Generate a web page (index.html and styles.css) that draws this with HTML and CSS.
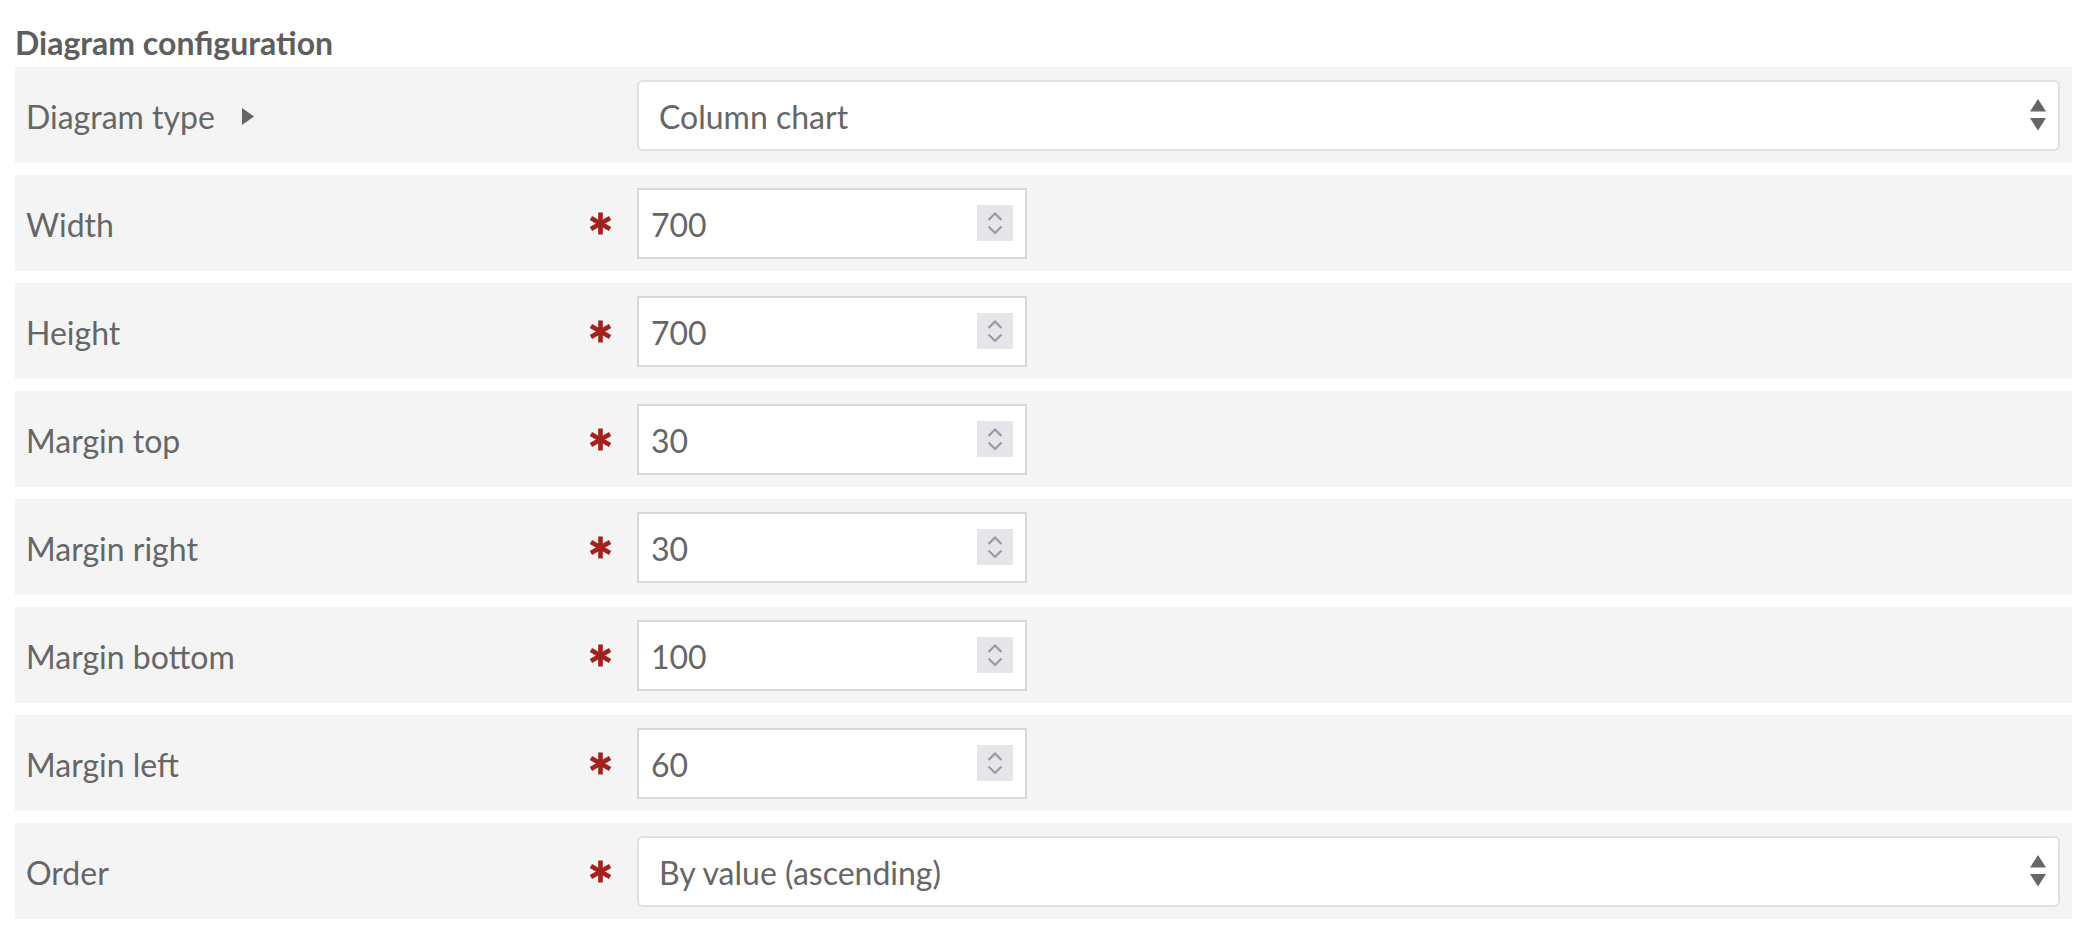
FILE: index.html
```html
<!DOCTYPE html>
<html lang="en">
<head>
<meta charset="utf-8">
<title>Diagram configuration</title>
<link rel="stylesheet" href="styles.css">
</head>
<body>
<div class="page">
  <h2 class="title">Diagram configuration</h2>

  <div class="row">
    <div class="label"><span class="txt">Diagram type</span>
      <svg class="caret" width="12" height="17" viewBox="0 0 12 17"><polygon points="0,0 12,8.5 0,17" fill="#666"/></svg>
    </div>
    <div class="req"></div>
    <div class="select"><span class="txt">Column chart</span>
      <svg class="arrows" width="16" height="33" viewBox="0 0 16 33"><polygon points="0,12.5 8,0 16,12.5" fill="#666"/><polygon points="0,19 16,19 8,31.5" fill="#666"/></svg>
    </div>
  </div>

  <div class="row">
    <div class="label"><span class="txt">Width</span></div>
    <div class="req"><svg class="star" width="23" height="23" viewBox="0 0 24 24"><g stroke="#a3221d" stroke-width="4.8"><line x1="12" y1="0.5" x2="12" y2="23.5"/><line x1="2" y1="6.25" x2="22" y2="17.75"/><line x1="2" y1="17.75" x2="22" y2="6.25"/></g></svg></div>
    <div class="num"><span class="txt">700</span>
      <span class="spin"><svg width="36" height="36" viewBox="0 0 36 36"><polyline points="11.5,15 18,8.5 24.5,15" fill="none" stroke="#9a9aa6" stroke-width="2.2"/><polyline points="11.5,21.5 18,28 24.5,21.5" fill="none" stroke="#9a9aa6" stroke-width="2.2"/></svg></span>
    </div>
  </div>

  <div class="row">
    <div class="label"><span class="txt">Height</span></div>
    <div class="req"><svg class="star" width="23" height="23" viewBox="0 0 24 24"><g stroke="#a3221d" stroke-width="4.8"><line x1="12" y1="0.5" x2="12" y2="23.5"/><line x1="2" y1="6.25" x2="22" y2="17.75"/><line x1="2" y1="17.75" x2="22" y2="6.25"/></g></svg></div>
    <div class="num"><span class="txt">700</span>
      <span class="spin"><svg width="36" height="36" viewBox="0 0 36 36"><polyline points="11.5,15 18,8.5 24.5,15" fill="none" stroke="#9a9aa6" stroke-width="2.2"/><polyline points="11.5,21.5 18,28 24.5,21.5" fill="none" stroke="#9a9aa6" stroke-width="2.2"/></svg></span>
    </div>
  </div>

  <div class="row">
    <div class="label"><span class="txt">Margin top</span></div>
    <div class="req"><svg class="star" width="23" height="23" viewBox="0 0 24 24"><g stroke="#a3221d" stroke-width="4.8"><line x1="12" y1="0.5" x2="12" y2="23.5"/><line x1="2" y1="6.25" x2="22" y2="17.75"/><line x1="2" y1="17.75" x2="22" y2="6.25"/></g></svg></div>
    <div class="num"><span class="txt">30</span>
      <span class="spin"><svg width="36" height="36" viewBox="0 0 36 36"><polyline points="11.5,15 18,8.5 24.5,15" fill="none" stroke="#9a9aa6" stroke-width="2.2"/><polyline points="11.5,21.5 18,28 24.5,21.5" fill="none" stroke="#9a9aa6" stroke-width="2.2"/></svg></span>
    </div>
  </div>

  <div class="row">
    <div class="label"><span class="txt">Margin right</span></div>
    <div class="req"><svg class="star" width="23" height="23" viewBox="0 0 24 24"><g stroke="#a3221d" stroke-width="4.8"><line x1="12" y1="0.5" x2="12" y2="23.5"/><line x1="2" y1="6.25" x2="22" y2="17.75"/><line x1="2" y1="17.75" x2="22" y2="6.25"/></g></svg></div>
    <div class="num"><span class="txt">30</span>
      <span class="spin"><svg width="36" height="36" viewBox="0 0 36 36"><polyline points="11.5,15 18,8.5 24.5,15" fill="none" stroke="#9a9aa6" stroke-width="2.2"/><polyline points="11.5,21.5 18,28 24.5,21.5" fill="none" stroke="#9a9aa6" stroke-width="2.2"/></svg></span>
    </div>
  </div>

  <div class="row">
    <div class="label"><span class="txt">Margin bottom</span></div>
    <div class="req"><svg class="star" width="23" height="23" viewBox="0 0 24 24"><g stroke="#a3221d" stroke-width="4.8"><line x1="12" y1="0.5" x2="12" y2="23.5"/><line x1="2" y1="6.25" x2="22" y2="17.75"/><line x1="2" y1="17.75" x2="22" y2="6.25"/></g></svg></div>
    <div class="num"><span class="txt">100</span>
      <span class="spin"><svg width="36" height="36" viewBox="0 0 36 36"><polyline points="11.5,15 18,8.5 24.5,15" fill="none" stroke="#9a9aa6" stroke-width="2.2"/><polyline points="11.5,21.5 18,28 24.5,21.5" fill="none" stroke="#9a9aa6" stroke-width="2.2"/></svg></span>
    </div>
  </div>

  <div class="row">
    <div class="label"><span class="txt">Margin left</span></div>
    <div class="req"><svg class="star" width="23" height="23" viewBox="0 0 24 24"><g stroke="#a3221d" stroke-width="4.8"><line x1="12" y1="0.5" x2="12" y2="23.5"/><line x1="2" y1="6.25" x2="22" y2="17.75"/><line x1="2" y1="17.75" x2="22" y2="6.25"/></g></svg></div>
    <div class="num"><span class="txt">60</span>
      <span class="spin"><svg width="36" height="36" viewBox="0 0 36 36"><polyline points="11.5,15 18,8.5 24.5,15" fill="none" stroke="#9a9aa6" stroke-width="2.2"/><polyline points="11.5,21.5 18,28 24.5,21.5" fill="none" stroke="#9a9aa6" stroke-width="2.2"/></svg></span>
    </div>
  </div>

  <div class="row">
    <div class="label"><span class="txt">Order</span></div>
    <div class="req"><svg class="star" width="23" height="23" viewBox="0 0 24 24"><g stroke="#a3221d" stroke-width="4.8"><line x1="12" y1="0.5" x2="12" y2="23.5"/><line x1="2" y1="6.25" x2="22" y2="17.75"/><line x1="2" y1="17.75" x2="22" y2="6.25"/></g></svg></div>
    <div class="select"><span class="txt">By value (ascending)</span>
      <svg class="arrows" width="16" height="33" viewBox="0 0 16 33"><polygon points="0,12.5 8,0 16,12.5" fill="#666"/><polygon points="0,19 16,19 8,31.5" fill="#666"/></svg>
    </div>
  </div>
</div>
</body>
</html>
```

FILE: styles.css
```css
html, body {
  margin: 0;
  padding: 0;
  background: #fff;
}

.page {
  padding: 25px 14px 0 15px;
  font-family: Lato, "Open Sans", sans-serif;
  color: #666;
  font-size: 32px;
}

.title {
  margin: 0 0 6px 0;
  font-size: 32px;
  line-height: 36px;
  font-weight: 700;
  color: #5e5e5e;
}

.row {
  display: flex;
  align-items: center;
  height: 96px;
  box-sizing: border-box;
  padding: 0 12px 0 11px;
  background: #f4f4f4;
  margin-bottom: 12px;
}

.txt {
  display: block;
  line-height: 36px;
  padding-top: 3px;
}

.label {
  flex: 0 0 563px;
  display: flex;
  align-items: center;
}

.caret {
  margin-left: 27px;
  margin-top: 2px;
}

.req {
  flex: 0 0 48px;
  display: flex;
  align-items: center;
}

.star {
  display: block;
}

.select {
  flex: 1;
  height: 71px;
  box-sizing: border-box;
  border: 2px solid #e0e0e0;
  border-radius: 6px;
  background: #fff;
  display: flex;
  align-items: center;
  justify-content: space-between;
  padding: 0 12px 0 20px;
}

.arrows {
  display: block;
}

.num {
  flex: 0 0 390px;
  height: 71px;
  box-sizing: border-box;
  border: 2px solid #d8d8d8;
  background: #fff;
  display: flex;
  align-items: center;
  justify-content: space-between;
  padding: 0 12px 0 12px;
}

.spin {
  display: block;
  width: 36px;
  height: 36px;
  background: #e6e6ea;
}

.spin svg {
  display: block;
}
```
